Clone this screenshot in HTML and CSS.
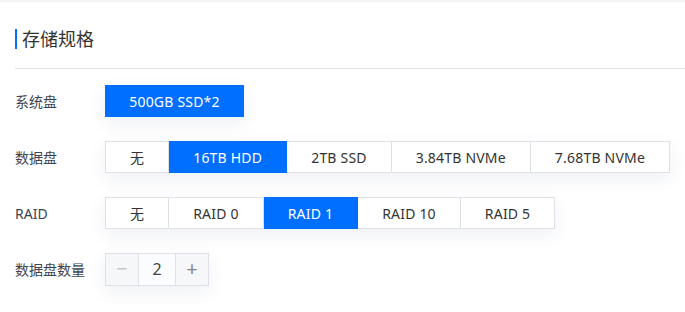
FILE: index.html
```html
<!DOCTYPE html>
<html lang="zh-CN">
<head>
    <meta charset="UTF-8">
    <title>存储规格</title>
    <meta name="viewport" content="width=device-width">
    <link rel="stylesheet" href="styles.css">
</head>
<body>
    <div class="panel">
        <div class="panel-head">
            <h2 class="panel-title">存储规格</h2>
        </div>

        <div class="form-row">
            <span class="form-label">系统盘</span>
            <div class="seg">
                <button class="seg-item seg-wide active">500GB SSD*2</button>
            </div>
        </div>

        <div class="form-row">
            <span class="form-label">数据盘</span>
            <div class="seg">
                <button class="seg-item">无</button>
                <button class="seg-item active">16TB HDD</button>
                <button class="seg-item">2TB SSD</button>
                <button class="seg-item">3.84TB NVMe</button>
                <button class="seg-item">7.68TB NVMe</button>
            </div>
        </div>

        <div class="form-row">
            <span class="form-label">RAID</span>
            <div class="seg">
                <button class="seg-item">无</button>
                <button class="seg-item">RAID 0</button>
                <button class="seg-item active">RAID 1</button>
                <button class="seg-item">RAID 10</button>
                <button class="seg-item">RAID 5</button>
            </div>
        </div>

        <div class="form-row">
            <span class="form-label">数据盘数量</span>
            <div class="stepper">
                <button class="step-btn disabled">&minus;</button>
                <span class="step-value">2</span>
                <button class="step-btn">+</button>
            </div>
        </div>
    </div>
</body>
</html>
```

FILE: styles.css
```css
*,
*::before,
*::after{
    margin: 0;
    padding: 0;
    box-sizing: border-box;
}
html{
    font: normal 14px/1.5 "Noto Sans", "Noto Sans CJK SC", sans-serif;
    color: #333;
    background: #fff;
}
body{
    border-top: 2px solid #f3f4f6;
}
.panel{
    padding: 27px 0 0 15px;
}
.panel-head{
    padding-bottom: 19px;
    border-bottom: 1px solid #e2e2e2;
    margin-bottom: 16px;
}
.panel-title{
    font-size: 18px;
    font-weight: normal;
    line-height: 20px;
    color: #333;
    border-left: 2px solid #006eff;
    padding-left: 5px;
}
.form-row{
    display: flex;
    align-items: center;
    height: 32px;
    margin-bottom: 24px;
}
.form-label{
    width: 90px;
    flex-shrink: 0;
    color: #3c4353;
}
.seg{
    display: flex;
    box-shadow: 0 6px 18px rgba(40, 70, 130, 0.08);
}
.seg-item{
    font: inherit;
    letter-spacing: 0.2px;
    height: 32px;
    padding: 0 24px;
    white-space: nowrap;
    border: 1px solid #dfe1e6;
    border-left: none;
    background: #fff;
    color: #333;
    cursor: pointer;
}
.seg-item:first-child{
    border-left: 1px solid #dfe1e6;
}
.seg-item.active{
    background: #006eff;
    border-color: #006eff;
    color: #fff;
}
.seg-wide{
    width: 139px;
    padding: 0;
}
.stepper{
    display: flex;
    height: 33px;
    border: 1px solid #dfe1e6;
    box-shadow: 0 6px 18px rgba(40, 70, 130, 0.08);
}
.step-btn{
    font: inherit;
    font-size: 20px;
    width: 32px;
    border: none;
    background: #f6f7f9;
    color: #888;
    cursor: pointer;
}
.step-btn.disabled{
    color: #c8c9cc;
    cursor: not-allowed;
}
.step-value{
    width: 38px;
    border-left: 1px solid #dfe1e6;
    border-right: 1px solid #dfe1e6;
    background: #fafcff;
    display: flex;
    align-items: center;
    justify-content: center;
    font-size: 16px;
    color: #444;
}
```
